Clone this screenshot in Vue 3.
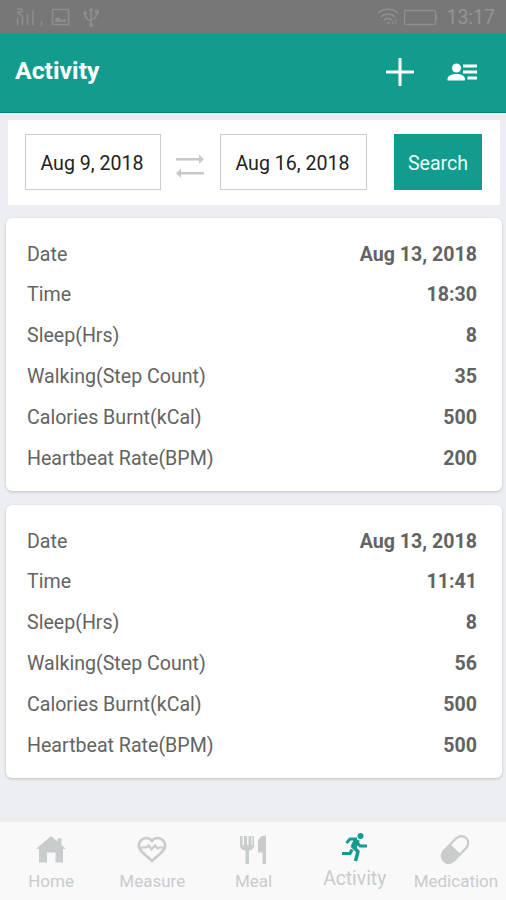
<template>
  <div class="screen">
    <div class="status">
      <svg class="status__left" width="90" height="34" viewBox="0 0 90 34" fill="none" stroke="currentColor" stroke-width="1.5">
        <path d="M17 9h5v3h-5M17 12l5 4M17.500 25.500v-7M22.500 25.500v-9M27.500 25.500V14M33 25.500V10.500" />
        <path d="M41.500 21v5" />
        <rect x="52.500" y="9.500" width="16" height="15" />
        <path d="M55 22v-3l3-2 4 3 4-1v3z" fill="currentColor" stroke="none" />
      </svg>
      <svg class="status__usb" width="18" height="22" viewBox="0 0 18 22" fill="none" stroke="currentColor" stroke-width="1.6">
        <path d="M9 3v15M9 15c-4-2-6-3-6-8M9 14c4-2 6-3 6-8" />
        <path d="M6.500 5 9 1l2.500 4z" fill="currentColor" stroke="none" />
        <circle cx="9" cy="19" r="2" fill="currentColor" stroke="none" />
        <circle cx="3" cy="7" r="2" fill="currentColor" stroke="none" />
        <path d="M13 4h4v4h-4z" fill="currentColor" stroke="none" />
      </svg>
      <div class="status__right">
        <svg width="60" height="20" viewBox="0 0 60 20" fill="none" stroke="currentColor" stroke-width="1.6">
          <path d="M1 6c6-5 14-5 20 0M4 10c4-4 10-4 14 0M7 13c3-2 5-2 8 0M10 16h3" />
          <path d="M16 17v-3M19 17v-5" stroke-width="1.2" />
          <rect x="27.500" y="3.500" width="31" height="14" rx="1" stroke-width="1.300" />
          <path d="M59.500 8v5" stroke-width="1.200" />
        </svg>
        <span class="status__time">13:17</span>
      </div>
    </div>

    <header class="header">
      <h1 class="header__title">Activity</h1>
      <div class="header__actions">
        <svg width="30" height="30" viewBox="0 0 30 30" fill="none" stroke="#fff" stroke-width="3">
          <path d="M15 1v28M1 15h28" />
        </svg>
        <svg width="30" height="20" viewBox="0 0 30 20" fill="#fff">
          <circle cx="9.500" cy="6" r="4.500" />
          <path d="M.5 18.500v-1.500c0-3 4-5 9-5s8.500 2 8.500 5v1.500z" />
          <path d="M16 2.500h14v3H16zM16 8.500h14v3H16zM20.500 14.500H30v3h-9.500z" />
        </svg>
      </div>
    </header>

    <main class="content">
      <section class="filter">
        <div class="filter__date filter__date--from">{{ fromDate }}</div>
        <svg class="filter__swap" width="28" height="24" viewBox="0 0 28 24" fill="#c5c9c9">
          <path d="M0 4h23V0.500L28 5.200 23 10V6.500H0zM28 18H5v-3.500L0 19.200 5 24v-3.500h23z" />
        </svg>
        <div class="filter__date filter__date--to">{{ toDate }}</div>
        <button class="filter__search">Search</button>
      </section>

      <section v-for="(record, index) in records" :key="index" class="card">
        <div v-for="(label, i) in labels" :key="label" class="card__row">
          <span>{{ label }}</span>
          <span class="card__value">{{ record[i] }}</span>
        </div>
      </section>
    </main>

    <nav class="tabs">
      <a class="tabs__item">
        <svg width="32" height="30" viewBox="0 0 32 30" fill="currentColor">
          <path d="M16 2 1 15h3v13.500h8V18.500h8.500v10H28V15h3l-4.500-4V4.500h-4v3z" />
        </svg>
        <span>Home</span>
      </a>
      <a class="tabs__item">
        <svg width="32" height="30" viewBox="0 0 32 30" fill="none" stroke="currentColor" stroke-width="2.700">
          <path d="M16 27 6 18C2.500 14.500 2 10.500 4.500 7 7.500 3 13 3 16 7c3-4 8.500-4 11.500 0 2.500 3.500 2 7.500-1.500 11z" />
          <path d="M5 13.500h5l3-2 2.500 4 3.500-4 2.500 3 2-1H27" stroke-width="2.200" />
        </svg>
        <span>Measure</span>
      </a>
      <a class="tabs__item">
        <svg width="32" height="30" viewBox="0 0 32 30" fill="currentColor">
          <path d="M3 2h2.500v9H7V2h3v9h1.500V2h3v9h1V2h1.500v9.500c0 3-2 4.500-5 5V30H8.500V16.500c-3.500-.5-5.500-2-5.500-5z" />
          <path d="M29 1.500V30h-3.500V18.500H21V9c0-4.500 2.500-7.500 8-7.500z" />
        </svg>
        <span>Meal</span>
      </a>
      <a class="tabs__item tabs__item--active">
        <svg width="32" height="30" viewBox="0 0 32 30" fill="none" stroke="#129c8e" stroke-linejoin="round">
          <circle cx="22.500" cy="4" r="3" fill="#129c8e" stroke="none" />
          <path d="M8.500 11 12 7h7" stroke-width="2.900" />
          <path d="M19 7.500 15.500 15.500" stroke-width="6" />
          <path d="m19 10 3 4h7" stroke-width="2.900" />
          <path d="m14 14 6 5.500L17.500 29" stroke-width="3.500" />
          <path d="M4 21.500h8l2-4" stroke-width="3.200" />
        </svg>
        <span>Activity</span>
      </a>
      <a class="tabs__item">
        <svg width="32" height="30" viewBox="0 0 32 30">
          <g transform="rotate(-46 16 15.500)">
            <rect x="0" y="8.500" width="32" height="14" rx="7" fill="none" stroke="currentColor" stroke-width="2.200" />
            <path d="M16.500 8.500H7a7 7 0 0 0 0 14h9.500z" fill="currentColor" />
          </g>
        </svg>
        <span>Medication</span>
      </a>
    </nav>
  </div>
</template>

<script setup>
import { ref } from 'vue'

const fromDate = ref('Aug 9, 2018')
const toDate = ref('Aug 16, 2018')

const labels = [
  'Date',
  'Time',
  'Sleep(Hrs)',
  'Walking(Step Count)',
  'Calories Burnt(kCal)',
  'Heartbeat Rate(BPM)',
]

const records = ref([
  ['Aug 13, 2018', '18:30', '8', '35', '500', '200'],
  ['Aug 13, 2018', '11:41', '8', '56', '500', '500'],
])
</script>

<style>
body {
  margin: 0;
}
</style>

<style scoped>
.screen {
  display: flex;
  flex-direction: column;
  height: 900px;
  overflow: hidden;
  background: #edeef2;
  font-family: Roboto, 'Liberation Sans', sans-serif;
}

.status {
  display: flex;
  align-items: center;
  height: 34px;
  background: #777;
  color: #8e8e8e;
}

.status__left {
  margin-right: -8px;
}

.status__right {
  display: flex;
  align-items: center;
  gap: 9px;
  margin-left: auto;
  padding-right: 11px;
}

.status__time {
  color: #959595;
  font-size: 19.5px;
  line-height: 34px;
  padding-top: 2px;
}

.header {
  display: flex;
  justify-content: space-between;
  box-sizing: border-box;
  height: 79px;
  padding: 0 29px 3px 15px;
  align-items: center;
  background: #129c8e;
  border-bottom: 1px solid #0b7d72;
}

.header__title {
  margin: 0;
  padding-bottom: 2px;
  color: #fff;
  font-size: 24.8px;
  font-weight: 700;
}

.header__actions {
  display: flex;
  align-items: center;
  gap: 32px;
}

.content {
  flex: 1;
  padding: 7px 4px 0 6px;
}

.filter {
  display: flex;
  align-items: center;
  box-sizing: border-box;
  height: 85px;
  margin: 0 2px 13px;
  padding: 0 18px 1px 17px;
  background: #fff;
}

.filter__date {
  box-sizing: border-box;
  height: 56px;
  padding-right: 2px;
  border: 1px solid #ccc;
  color: #222;
  font-size: 19.6px;
  line-height: 58px;
  text-align: center;
}

.filter__date--from {
  width: 136px;
}

.filter__date--to {
  width: 147px;
}

.filter__swap {
  margin: 8px 16px 0 15px;
}

.filter__search {
  width: 88px;
  height: 56px;
  margin-left: auto;
  padding: 3px 0 0;
  border: none;
  background: #129c8e;
  color: #e8fffb;
  font-family: inherit;
  font-size: 19.6px;
}

.card {
  box-sizing: border-box;
  height: 273px;
  margin-bottom: 14px;
  padding: 15.6px 25px 0 21px;
  border-radius: 6px;
  background: #fff;
  box-shadow: 0 1px 3px rgba(0, 0, 0, 0.2);
}

.card__row {
  display: flex;
  justify-content: space-between;
  height: 40.8px;
  color: #636363;
  font-size: 19.6px;
  line-height: 42px;
}

.card__value {
  font-weight: 700;
}

.tabs {
  display: flex;
  height: 78px;
  background: #f9f9f9;
  color: #c8cccd;
}

.tabs__item {
  display: flex;
  flex: 1 1 0;
  flex-direction: column;
  align-items: center;
  min-width: 0;
  padding-top: 12px;
  font-size: 17px;
}

.tabs__item span {
  margin-top: 6px;
  padding-left: 1px;
  line-height: 22px;
}

.tabs__item--active {
  padding-top: 10px;
  font-size: 19.3px;
}

.tabs__item--active span {
  margin-top: 6px;
}
</style>
